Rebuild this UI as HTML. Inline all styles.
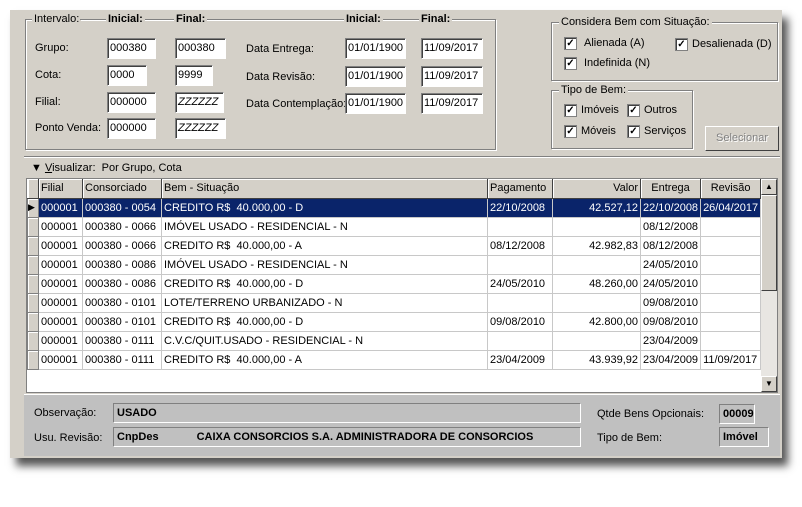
<!DOCTYPE html>
<html><head><meta charset="utf-8"><style>
*{box-sizing:border-box;margin:0;padding:0}
body{width:802px;height:507px;background:#fff;position:relative;overflow:hidden;font-family:"Liberation Sans",sans-serif;font-size:11px;color:#000}
.a{position:absolute}
.win{left:10px;top:10px;width:772px;height:448px;background:#d4d0c8;box-shadow:6px 8px 8px #555}
.gb{position:absolute;border:1px solid #808080;box-shadow:1px 1px 0 #fff inset,1px 1px 0 #fff}
.gl{position:absolute;background:#d4d0c8;padding:0 2px;top:-7px;white-space:nowrap}
.in{position:absolute;background:#fff;border-top:1px solid #808080;border-left:1px solid #808080;border-right:1px solid #fff;border-bottom:1px solid #fff;box-shadow:inset 1px 1px 0 #404040;height:21px;padding:3px 0 0 2px;font-size:11px}
.cb{position:absolute;width:13px;height:13px;background:#fff;border:1px solid #808080;box-shadow:inset 1px 1px 0 #404040;font-size:10px;line-height:11px;text-align:center;font-weight:bold}
.grid{left:26px;top:178px;width:752px;height:215px;background:#fff;border:1px solid #808080}
table{border-collapse:collapse;position:absolute;left:0;top:0;table-layout:fixed}
td{height:19px;border:1px solid #c8c8c8;padding:0 2px;white-space:nowrap;overflow:hidden}
th{height:19px;background:#d4d0c8;font-weight:normal;text-align:left;padding:0 2px;border-right:1px solid #404040;border-bottom:1px solid #404040;box-shadow:inset 1px 1px 0 #fff}
td.i{background:#d4d0c8;border:1px solid #808080;box-shadow:inset 1px 1px 0 #fff}
tr.s td{background:#0a246a;color:#fff}
.r{text-align:right}
.ro{position:absolute;background:#c0c0c0;border-top:1px solid #808080;border-left:1px solid #808080;border-right:1px solid #fff;border-bottom:1px solid #fff;font-weight:bold;padding:3px 0 0 3px;height:20px;font-size:11px}
</style></head><body>
<div class="a win"></div>
<div class="gb" style="left:25px;top:19px;width:471px;height:131px">
<span class="gl" style="left:6px">Intervalo: </span>
<span class="gl" style="left:80px;font-weight:bold">Inicial:</span>
<span class="gl" style="left:148px;font-weight:bold">Final:</span>
<span class="gl" style="left:318px;font-weight:bold">Inicial:</span>
<span class="gl" style="left:393px;font-weight:bold">Final:</span>
<div style="position:absolute;left:54px;top:-1px;width:24px;border-top:1px solid #808080"></div>
</div>
<span class="a" style="left:35px;top:42px">Grupo:</span>
<span class="a" style="left:35px;top:69px">Cota:</span>
<span class="a" style="left:35px;top:96px">Filial:</span>
<span class="a" style="left:35px;top:122px">Ponto Venda:</span>
<div class="in" style="left:107px;top:38px;width:49px">000380</div>
<div class="in" style="left:175px;top:38px;width:51px">000380</div>
<div class="in" style="left:107px;top:65px;width:40px">0000</div>
<div class="in" style="left:175px;top:65px;width:38px">9999</div>
<div class="in" style="left:107px;top:92px;width:49px">000000</div>
<div class="in" style="left:175px;top:92px;width:49px;font-style:italic">ZZZZZZ</div>
<div class="in" style="left:107px;top:118px;width:49px">000000</div>
<div class="in" style="left:175px;top:118px;width:51px;font-style:italic">ZZZZZZ</div>
<span class="a" style="left:246px;top:43px">Data Entrega:</span>
<span class="a" style="left:246px;top:71px">Data Revisão:</span>
<span class="a" style="left:246px;top:98px">Data Contemplação:</span>
<div class="in" style="left:345px;top:38px;width:61px">01/01/1900</div>
<div class="in" style="left:421px;top:38px;width:62px">11/09/2017</div>
<div class="in" style="left:345px;top:66px;width:61px">01/01/1900</div>
<div class="in" style="left:421px;top:66px;width:62px">11/09/2017</div>
<div class="in" style="left:345px;top:93px;width:61px">01/01/1900</div>
<div class="in" style="left:421px;top:93px;width:62px">11/09/2017</div>

<div class="gb" style="left:551px;top:22px;width:227px;height:59px"><span class="gl" style="left:7px">Considera Bem com Situação:</span></div>
<div class="cb" style="left:564px;top:37px">✓</div><span class="a" style="left:584px;top:37px">Alienada (A)</span>
<div class="cb" style="left:675px;top:38px">✓</div><span class="a" style="left:692px;top:38px">Desalienada (D)</span>
<div class="cb" style="left:564px;top:57px">✓</div><span class="a" style="left:584px;top:57px">Indefinida (N)</span>
<div class="gb" style="left:551px;top:90px;width:142px;height:59px"><span class="gl" style="left:7px">Tipo de Bem:</span></div>
<div class="cb" style="left:564px;top:104px">✓</div><span class="a" style="left:581px;top:104px">Imóveis</span>
<div class="cb" style="left:627px;top:104px">✓</div><span class="a" style="left:644px;top:104px">Outros</span>
<div class="cb" style="left:564px;top:125px">✓</div><span class="a" style="left:581px;top:125px">Móveis</span>
<div class="cb" style="left:627px;top:125px">✓</div><span class="a" style="left:644px;top:125px">Serviços</span>
<div class="a" style="left:705px;top:126px;width:74px;height:25px;border:1px solid #fff;border-right-color:#404040;border-bottom-color:#404040;color:#808080;text-align:center;line-height:22px;text-shadow:1px 1px 0 #fff">Selecionar</div>

<div class="a" style="left:24px;top:156px;width:756px;border-top:1px solid #808080;border-bottom:1px solid #fff"></div>
<span class="a" style="left:31px;top:162px">▼ <u>V</u>isualizar:&nbsp; Por Grupo, Cota</span>

<div class="a grid">
<table>
<colgroup><col style="width:11px"><col style="width:44px"><col style="width:79px"><col style="width:326px"><col style="width:65px"><col style="width:88px"><col style="width:59px"><col style="width:58px"></colgroup>
<tr><th></th><th>Filial</th><th>Consorciado</th><th>Bem - Situação</th><th>Pagamento</th><th class="r">Valor</th><th style="text-align:center">Entrega</th><th style="text-align:center">Revisão</th></tr>
<tr class="s"><td class="i" style="background:#d4d0c8;color:#000;font-size:9px;padding:0">▶</td><td>000001</td><td>000380 - 0054</td><td>CREDITO R$&nbsp; 40.000,00 - D</td><td>22/10/2008</td><td class="r">42.527,12</td><td>22/10/2008</td><td>26/04/2017</td></tr>
<tr><td class="i"></td><td>000001</td><td>000380 - 0066</td><td>IMÓVEL USADO - RESIDENCIAL - N</td><td></td><td></td><td>08/12/2008</td><td></td></tr>
<tr><td class="i"></td><td>000001</td><td>000380 - 0066</td><td>CREDITO R$&nbsp; 40.000,00 - A</td><td>08/12/2008</td><td class="r">42.982,83</td><td>08/12/2008</td><td></td></tr>
<tr><td class="i"></td><td>000001</td><td>000380 - 0086</td><td>IMÓVEL USADO - RESIDENCIAL - N</td><td></td><td></td><td>24/05/2010</td><td></td></tr>
<tr><td class="i"></td><td>000001</td><td>000380 - 0086</td><td>CREDITO R$&nbsp; 40.000,00 - D</td><td>24/05/2010</td><td class="r">48.260,00</td><td>24/05/2010</td><td></td></tr>
<tr><td class="i"></td><td>000001</td><td>000380 - 0101</td><td>LOTE/TERRENO URBANIZADO - N</td><td></td><td></td><td>09/08/2010</td><td></td></tr>
<tr><td class="i"></td><td>000001</td><td>000380 - 0101</td><td>CREDITO R$&nbsp; 40.000,00 - D</td><td>09/08/2010</td><td class="r">42.800,00</td><td>09/08/2010</td><td></td></tr>
<tr><td class="i"></td><td>000001</td><td>000380 - 0111</td><td>C.V.C/QUIT.USADO - RESIDENCIAL - N</td><td></td><td></td><td>23/04/2009</td><td></td></tr>
<tr><td class="i"></td><td>000001</td><td>000380 - 0111</td><td>CREDITO R$&nbsp; 40.000,00 - A</td><td>23/04/2009</td><td class="r">43.939,92</td><td>23/04/2009</td><td>11/09/2017</td></tr>
</table>
<div class="a" style="left:734px;top:0;width:16px;height:213px;background:#e8e6e2"></div>
<div class="a" style="left:734px;top:0;width:16px;height:16px;background:#d4d0c8;border:1px solid #fff;border-right-color:#404040;border-bottom-color:#404040;font-size:8px;text-align:center;line-height:13px">▲</div>
<div class="a" style="left:734px;top:16px;width:16px;height:96px;background:#d4d0c8;border:1px solid #fff;border-right-color:#404040;border-bottom-color:#404040"></div>
<div class="a" style="left:734px;top:197px;width:16px;height:16px;background:#d4d0c8;border:1px solid #fff;border-right-color:#404040;border-bottom-color:#404040;font-size:8px;text-align:center;line-height:13px">▼</div>
</div>

<div class="a" style="left:24px;top:394px;width:756px;height:62px;background:#c0c0c0;border-top:1px solid #fff"></div>
<span class="a" style="left:34px;top:407px">Observação:</span>
<span class="a" style="left:34px;top:432px">Usu. Revisão:</span>
<div class="ro" style="left:113px;top:403px;width:468px">USADO</div>
<div class="ro" style="left:113px;top:427px;width:468px">CnpDes<span style="margin-left:38px">CAIXA CONSORCIOS S.A. ADMINISTRADORA DE CONSORCIOS</span></div>
<span class="a" style="left:597px;top:408px">Qtde Bens Opcionais:</span>
<span class="a" style="left:597px;top:432px">Tipo de Bem:</span>
<div class="ro" style="left:719px;top:404px;width:36px">00009</div>
<div class="ro" style="left:719px;top:427px;width:50px">Imóvel</div>
</body></html>
